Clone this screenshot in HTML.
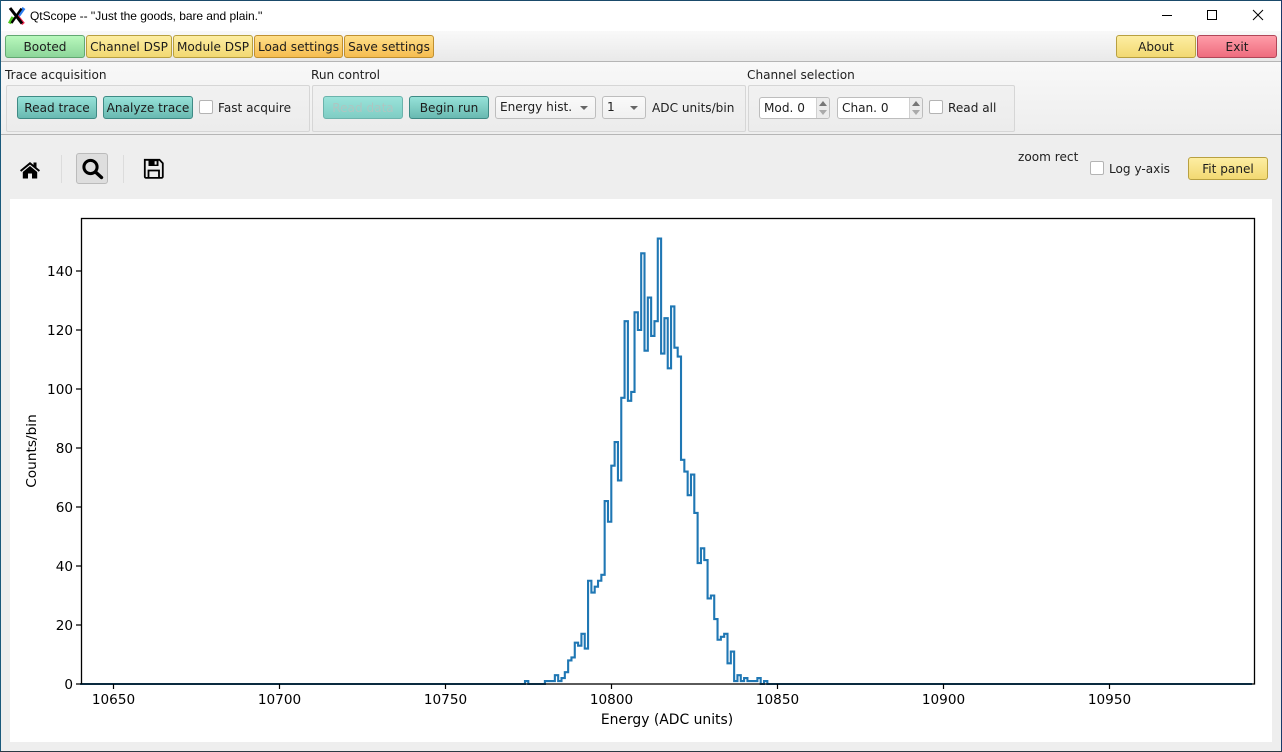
<!DOCTYPE html>
<html><head><meta charset="utf-8"><title>QtScope</title>
<style>
html,body{margin:0;padding:0;background:#efefef}
#w{position:relative;width:1282px;height:752px;overflow:hidden;background:#eeeeee;font-family:"DejaVu Sans",sans-serif;font-size:12.1px;color:#202020}
#w>div,#w>span,#w>svg{position:absolute}
.t{white-space:nowrap;line-height:16px}
.b{box-sizing:border-box;border:1px solid;border-radius:3px;text-align:center;height:23px;line-height:23px;white-space:nowrap;color:#1c1c1c}
.g{background:linear-gradient(#b8f8bc,#8dd69a);border-color:#62a872}
.y{background:linear-gradient(#fdeea2,#f2d972);border-color:#b8a040}
.o{background:linear-gradient(#ffdf88,#f6bd50);border-color:#c09030}
.r{background:linear-gradient(#ff9ca8,#ee6c7e);border-color:#b04658}
.c{background:linear-gradient(#96e2d8,#69b9b1);border-color:#3f8a85}
.d{background:linear-gradient(#9ae3da,#7fcdc4);border-color:#6cb3ac;color:#adc6c2}
.box{box-sizing:border-box;border:1px solid #d6d6d6;border-radius:2px;background:linear-gradient(#f1f1f1,#ececec)}
.ck{box-sizing:border-box;width:14px;height:14px;background:#fff;border:1px solid #b4b4b4;border-radius:2px}
.cb{box-sizing:border-box;height:23px;background:linear-gradient(#fafafa,#f0f0f0);border:1px solid #bdbdbd;border-radius:3px;line-height:21px;padding-left:4px;white-space:nowrap}
.cb i{position:absolute;right:7px;top:9px;width:0;height:0;border-left:4px solid transparent;border-right:4px solid transparent;border-top:4px solid #666}
.sp{box-sizing:border-box;height:22px;background:#fff;border:1px solid #bdbdbd;border-radius:3px;line-height:20px;padding-left:4px;white-space:nowrap}
.sp u{position:absolute;right:0;top:0;bottom:0;width:12px;background:#ececec;border-left:1px solid #d0d0d0;border-radius:0 2px 2px 0}
.sp u:before{content:"";position:absolute;left:2px;top:3px;border-left:4px solid transparent;border-right:4px solid transparent;border-bottom:5px solid #777}
.sp u:after{content:"";position:absolute;left:2px;bottom:3px;border-left:4px solid transparent;border-right:4px solid transparent;border-top:5px solid #aaa}
</style></head><body>
<div id="w">
<!-- window frame / title -->
<div style="left:0;top:0;width:1282px;height:31px;background:#fff"></div>
<div style="left:0;top:0;width:1282px;height:1px;background:#1a4a6a"></div>
<div style="left:0;top:0;width:1px;height:752px;background:#1a5a7c"></div>
<div style="left:1281px;top:0;width:1px;height:752px;background:#1a3a6a"></div>
<div style="left:0;top:751px;width:1282px;height:1px;background:#2a3a44"></div>
<svg style="left:8px;top:7px" width="18" height="18" viewBox="0 0 18 18" fill="none" stroke-linecap="butt">
<path d="M5 10L1.5 16.5" stroke="#4ec820" stroke-width="3.4"/>
<path d="M16 1L9.5 10" stroke="#2a7cf0" stroke-width="3.4"/>
<path d="M9 9L15.5 17" stroke="#f02850" stroke-width="3.4"/>
<path d="M2 1L14 16.5" stroke="#000" stroke-width="3"/>
<path d="M13.5 1.5L3.5 16" stroke="#000" stroke-width="2.4"/>
</svg>
<span class="t" style="left:30px;top:8px;font-family:'Liberation Sans',sans-serif;font-size:12px;color:#000;letter-spacing:-.05px">QtScope -- ''Just the goods, bare and plain.''</span>
<svg style="left:1150px;top:0" width="131" height="31" viewBox="0 0 131 31" fill="none" stroke="#000" stroke-width="1">
<path d="M12 15.5H22"/><rect x="57.5" y="10.5" width="9" height="9"/><path d="M103 10L113 20M113 10L103 20"/>
</svg>

<!-- top toolbar -->
<div style="left:1px;top:31px;width:1280px;height:30px;background:linear-gradient(#f9f9f9,#e9e9e9)"></div>
<div style="left:1px;top:61px;width:1280px;height:1px;background:#b5b5b5"></div>
<div class="b g" style="left:5px;top:35px;width:80px">Booted</div>
<div class="b y" style="left:86px;top:35px;width:86px">Channel DSP</div>
<div class="b y" style="left:173px;top:35px;width:80px">Module DSP</div>
<div class="b o" style="left:254px;top:35px;width:89px">Load settings</div>
<div class="b o" style="left:344px;top:35px;width:90px">Save settings</div>
<div class="b y" style="left:1116px;top:35px;width:80px">About</div>
<div class="b r" style="left:1197px;top:35px;width:80px">Exit</div>

<!-- second toolbar -->
<div style="left:1px;top:62px;width:1280px;height:72px;background:linear-gradient(#f8f8f8,#eeeeee)"></div>
<div style="left:1px;top:134px;width:1280px;height:1px;background:#b5b5b5"></div>
<span class="t" style="left:5px;top:67px">Trace acquisition</span>
<span class="t" style="left:311px;top:67px">Run control</span>
<span class="t" style="left:747px;top:67px">Channel selection</span>
<div class="box" style="left:6px;top:85px;width:304px;height:47px"></div>
<div class="box" style="left:312px;top:85px;width:434px;height:47px"></div>
<div class="box" style="left:748px;top:85px;width:267px;height:47px"></div>
<div class="b c" style="left:17px;top:96px;width:80px">Read trace</div>
<div class="b c" style="left:103px;top:96px;width:90px">Analyze trace</div>
<div class="ck" style="left:199px;top:100px"></div>
<span class="t" style="left:218px;top:100px">Fast acquire</span>
<div class="b d" style="left:323px;top:96px;width:80px">Read data</div>
<div class="b c" style="left:409px;top:96px;width:80px">Begin run</div>
<div class="cb" style="left:495px;top:96px;width:101px">Energy hist.<i></i></div>
<div class="cb" style="left:602px;top:96px;width:44px">1<i></i></div>
<span class="t" style="left:652px;top:100px">ADC units/bin</span>
<div class="sp" style="left:759px;top:97px;width:71px">Mod. 0<u></u></div>
<div class="sp" style="left:837px;top:97px;width:86px">Chan. 0<u></u></div>
<div class="ck" style="left:929px;top:100px"></div>
<span class="t" style="left:948px;top:100px">Read all</span>

<!-- plot toolbar -->
<div style="left:61px;top:155px;width:1px;height:28px;background:#dcdcdc"></div>
<div style="left:123px;top:155px;width:1px;height:28px;background:#dcdcdc"></div>
<div style="left:76px;top:153px;width:32px;height:31px;box-sizing:border-box;background:#dedede;border:1px solid #bbb;border-radius:3px"></div>
<svg style="left:18px;top:158px" width="24" height="24" viewBox="0 0 24 24">
<path d="M2 12.2L12 4l3.5 2.9V4.5h3V9.4L22 12.2l-1.2 1.5L12 6.6 3.2 13.7Z" fill="#000"/>
<path d="M4.8 14L12 8l7.2 6V20.5h-5.2v-5h-4v5H4.8Z" fill="#000"/>
</svg>
<svg style="left:79px;top:156px" width="26" height="26" viewBox="0 0 26 26" fill="none" stroke="#000">
<circle cx="11.5" cy="11" r="6.6" stroke-width="3"/>
<path d="M16.5 16L22.5 21.5" stroke-width="3.4" stroke-linecap="round"/>
</svg>
<svg style="left:142px;top:157px" width="24" height="24" viewBox="0 0 24 24" fill="none" stroke="#000">
<path d="M2.8 2.8H17.5L20.8 6.2V19.6a1.3 1.3 0 0 1-1.3 1.3H4.1A1.3 1.3 0 0 1 2.8 19.6Z" stroke-width="1.8"/>
<path d="M6.5 2.8H16.5V9H6.5Z" fill="#000" stroke="none"/>
<rect x="12.6" y="4.2" width="2" height="3.4" fill="#eee" stroke="none"/>
<path d="M6.5 20.5V13.5H17V20.5" stroke-width="1.8"/>
</svg>
<span class="t" style="left:1018px;top:149px">zoom rect</span>
<div class="ck" style="left:1090px;top:161px"></div>
<span class="t" style="left:1109px;top:161px">Log y-axis</span>
<div class="b y" style="left:1188px;top:157px;width:80px">Fit panel</div>

<!-- plot -->
<div style="left:10px;top:199px;width:1262px;height:543px;background:#fff"></div>
<svg style="left:0;top:0" width="1282" height="752" viewBox="0 0 1282 752">
<g transform="translate(611.3,684) scale(3.32,-2.95)">
<path fill="none" stroke="#1f77b4" stroke-width="2.1" vector-effect="non-scaling-stroke" stroke-linejoin="miter" d="M-160 0 H-26 V1 H-25 V0 H-20 V1 H-17 V3 H-16 V1 H-15 V2 H-14 V4 H-13 V8 H-12 V9 H-11 V14 H-10 V13 H-9 V17 H-8 V12 H-7 V35 H-6 V31 H-5 V33 H-4 V35 H-3 V37 H-2 V62 H-1 V55 H0 V74 H1 V82 H2 V69 H3 V97 H4 V123 H5 V96 H6 V99 H7 V126 H8 V120 H9 V146 H10 V113 H11 V131 H12 V118 H13 V123 H14 V151 H15 V112 H16 V124 H17 V107 H18 V128 H19 V114 H20 V111 H21 V76 H22 V72 H23 V64 H24 V71 H25 V58 H26 V41 H27 V46 H28 V42 H29 V29 H30 V30 H31 V22 H32 V15 H33 V16 H34 V17 H35 V7 H36 V11 H37 V1 H38 V3 H39 V1 H40 V2 H41 V1 H44 V2 H45 V0 H46 V1 H47 V0 H193"/>
</g>
<rect x="81.5" y="218.5" width="1173" height="465.5" fill="none" stroke="#000" stroke-width="1.3"/>
<path stroke="#000" stroke-width="1.2" fill="none" d="M113.5 684v5M279.5 684v5M445.5 684v5M611.5 684v5M777.5 684v5M943.5 684v5M1109.5 684v5M76 684h5M76 625h5M76 566h5M76 507h5M76 448h5M76 389h5M76 330h5M76 271h5"/>
<g font-family="'DejaVu Sans',sans-serif" font-size="13.6" fill="#000" text-anchor="middle">
<text x="113.5" y="704">10650</text><text x="279.5" y="704">10700</text><text x="445.5" y="704">10750</text><text x="611.5" y="704">10800</text><text x="777.5" y="704">10850</text><text x="943.5" y="704">10900</text><text x="1109.5" y="704">10950</text>
<text x="667" y="724" font-size="13.9">Energy (ADC units)</text>
<text transform="translate(36,451) rotate(-90)" font-size="13.7">Counts/bin</text>
</g>
<g font-family="'DejaVu Sans',sans-serif" font-size="13.6" fill="#000" text-anchor="end">
<text x="73" y="689">0</text><text x="73" y="630">20</text><text x="73" y="571">40</text><text x="73" y="512">60</text><text x="73" y="453">80</text><text x="73" y="394">100</text><text x="73" y="335">120</text><text x="73" y="276">140</text>
</g>
</svg>
</div>
</body></html>
